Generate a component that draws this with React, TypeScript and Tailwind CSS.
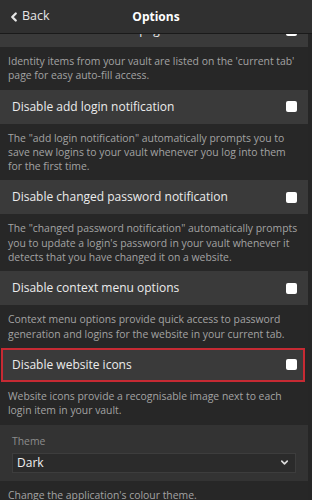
import { ChevronDown, ChevronLeft } from 'lucide-react';

type Item = { title: string; desc: string; highlight?: boolean };

const items: Item[] = [
  {
    title: 'Show identities on tab page',
    desc: "Identity items from your vault are listed on the 'current tab' page for easy auto-fill access.",
  },
  {
    title: 'Disable add login notification',
    desc: 'The "add login notification" automatically prompts you to save new logins to your vault whenever you log into them for the first time.',
  },
  {
    title: 'Disable changed password notification',
    desc: 'The "changed password notification" automatically prompts you to update a login\'s password in your vault whenever it detects that you have changed it on a website.',
  },
  {
    title: 'Disable context menu options',
    desc: 'Context menu options provide quick access to password generation and logins for the website in your current tab.',
  },
  {
    title: 'Disable website icons',
    desc: 'Website icons provide a recognisable image next to each login item in your vault.',
    highlight: true,
  },
];

function Row({ item }: { item: Item }) {
  return (
    <div>
      <div
        className={
          item.highlight
            ? 'ml-px mr-[3px] flex h-[34px] items-center justify-between border-2 border-[#c62a33] bg-[#3a3a3a] pl-[9px] pr-[6px]'
            : 'flex h-[34px] items-center justify-between bg-[#3a3a3a] pl-3 pr-[11px]'
        }
      >
        <span className="text-[12px] text-[#ececec]">{item.title}</span>
        <span className="size-[11px] rounded-[2px] bg-white" />
      </div>
      <div className="bg-[#272727] py-[7px] pl-2 pr-[6px] text-[10.4px] leading-[14.3px] text-[#a3a3a3]">
        {item.desc}
      </div>
    </div>
  );
}

export default function App() {
  return (
    <div
      className="flex h-[500px] w-[312px] flex-col overflow-hidden bg-[#262626]"
      style={{ fontFamily: '"Open Sans", "Noto Sans", sans-serif' }}
    >
      <header className="relative z-10 flex h-[34px] shrink-0 items-center justify-center border-b border-[#1a1a1a] bg-[#303030]">
        <div className="absolute left-[7px] flex items-center text-[12.5px] text-[#e6e6e6]">
          <ChevronLeft size={14} strokeWidth={4} className="mr-[1px]" />
          <span>Back</span>
        </div>
        <span className="text-[12px] font-bold text-white">Options</span>
      </header>
      <div className="flex-1 overflow-hidden pr-[4px]">
        <div className="-mt-[21px]">
          {items.map((item) => (
            <Row key={item.title} item={item} />
          ))}
          <div className="bg-[#333333] px-3 pt-[8px] pb-[8px]">
            <div className="text-[10.4px] leading-[16px] text-[#8c8c8c]">Theme</div>
            <div className="mt-[4px] flex h-[20px] items-center justify-between border border-[#3d3d3d] bg-[#2b2b2b] pl-[4px] pr-[5px]">
              <span className="text-[12px] text-[#f0f0f0]">Dark</span>
              <ChevronDown size={11} strokeWidth={3.5} className="text-[#dcdcdc]" />
            </div>
          </div>
          <div className="bg-[#272727] py-[7px] pl-2 pr-[6px] text-[10.4px] leading-[14.3px] text-[#a3a3a3]">
            Change the application's colour theme.
          </div>
        </div>
      </div>
    </div>
  );
}
